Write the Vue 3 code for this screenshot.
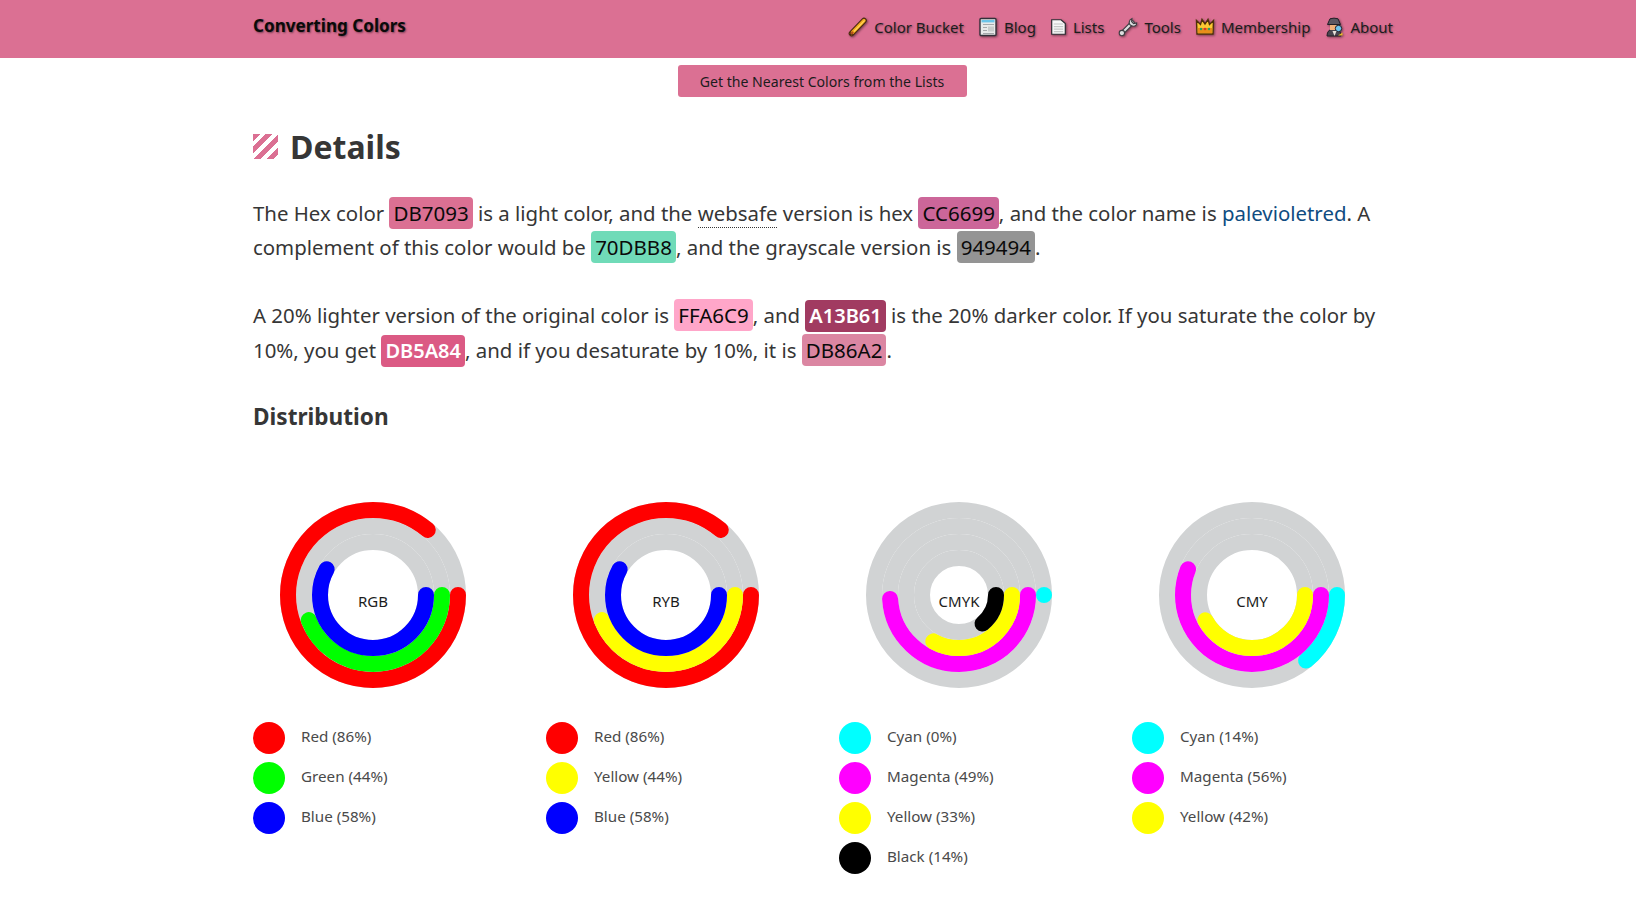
<script setup>
const navItems = [
  { label: 'Color Bucket', icon: 'pencil' },
  { label: 'Blog', icon: 'news' },
  { label: 'Lists', icon: 'page' },
  { label: 'Tools', icon: 'wrench' },
  { label: 'Membership', icon: 'crown' },
  { label: 'About', icon: 'detective' }
]

const charts = [
  {
    title: 'RGB',
    series: [
      { name: 'Red', value: 86, color: '#ff0000' },
      { name: 'Green', value: 44, color: '#00ff00' },
      { name: 'Blue', value: 58, color: '#0000ff' }
    ]
  },
  {
    title: 'RYB',
    series: [
      { name: 'Red', value: 86, color: '#ff0000' },
      { name: 'Yellow', value: 44, color: '#ffff00' },
      { name: 'Blue', value: 58, color: '#0000ff' }
    ]
  },
  {
    title: 'CMYK',
    series: [
      { name: 'Cyan', value: 0, color: '#00ffff' },
      { name: 'Magenta', value: 49, color: '#ff00ff' },
      { name: 'Yellow', value: 33, color: '#ffff00' },
      { name: 'Black', value: 14, color: '#000000' }
    ]
  },
  {
    title: 'CMY',
    series: [
      { name: 'Cyan', value: 14, color: '#00ffff' },
      { name: 'Magenta', value: 56, color: '#ff00ff' },
      { name: 'Yellow', value: 42, color: '#ffff00' }
    ]
  }
]

// rings start at 85 and step in by 16
function radius(i) {
  return 85 - i * 16
}

function dash(i, value) {
  const c = 2 * Math.PI * radius(i)
  return `${(c * value) / 100} ${c}`
}
</script>

<template>
  <div class="page">
    <header class="topbar">
      <div class="wrap topbar-inner">
        <span class="brand">Converting Colors</span>
        <nav class="nav">
          <a v-for="item in navItems" :key="item.label" class="nav-link">
            <svg class="nav-icon" :class="{ narrow: item.icon === 'page' }" viewBox="0 0 20 20">
              <g v-if="item.icon === 'pencil'">
                <path d="M3.5 16.5 L16 3.5" stroke="#4a2a10" stroke-width="5.6" stroke-linecap="round" />
                <path d="M3.5 16.5 L16 3.5" stroke="#f2a71e" stroke-width="3.4" stroke-linecap="round" />
                <path d="M6.5 14 L16.2 3.8" stroke="#ffd75a" stroke-width="1.2" stroke-linecap="round" />
                <path d="M2 18 L2.5 14.5 L5.5 17.5 Z" fill="#4a2a10" stroke="#4a2a10" stroke-width="1" />
                <path d="M3 16.8 L5 14.8" stroke="#b5561c" stroke-width="2.4" />
              </g>
              <g v-else-if="item.icon === 'news'">
                <rect x="2" y="1.5" width="16" height="17" rx="1" fill="#e8eaea" stroke="#33313a" stroke-width="1.4" />
                <rect x="3.5" y="3" width="13" height="2.4" fill="#6cc4e8" />
                <path d="M5 7.5h11M5 10.5h4M5 13.5h4M5 16.5h11" stroke="#a4a8ab" stroke-width="1.2" />
                <rect x="10" y="9.5" width="6" height="5" fill="#c8cccc" />
              </g>
              <g v-else-if="item.icon === 'page'">
                <path d="M2 1.5 H13 L18 6 V18.5 H2 Z" fill="#f6f7f7" stroke="#2c2930" stroke-width="1.4" />
                <path d="M4.5 6.5h11M4.5 9.5h11M4.5 12.5h11M4.5 15.5h11" stroke="#c3c6c6" stroke-width="1.3" />
              </g>
              <g v-else-if="item.icon === 'wrench'">
                <path d="M4 16 L14.5 5.5" stroke="#3d3d42" stroke-width="4.4" stroke-linecap="round" />
                <path d="M4 16 L14.5 5.5" stroke="#dcdedf" stroke-width="2.2" stroke-linecap="round" />
                <path d="M14 1.5 L13.6 4.6 L15.6 6.6 L18.7 6 Q18.6 9.2 15.4 9.2 Q10.9 8.8 11.2 5 Q11.7 2.2 14 1.5 Z" fill="#dcdedf" stroke="#3d3d42" stroke-width="1.1" />
                <circle cx="3.9" cy="16.1" r="2.7" fill="#dcdedf" stroke="#3d3d42" stroke-width="1.1" />
              </g>
              <g v-else-if="item.icon === 'crown'">
                <path d="M1.5 3.5 L5.5 7.5 L7 2.5 L10 7 L13 2.5 L14.5 7.5 L18.5 3.5 L18 17 H2 Z" fill="#fcc932" stroke="#4f300a" stroke-width="1.4" />
                <rect x="2.8" y="11" width="14.4" height="5.2" fill="#e88f1a" />
                <circle cx="6" cy="12" r="1.2" fill="#25a166" />
                <circle cx="10" cy="12" r="1.3" fill="#d8342c" />
                <circle cx="14" cy="12" r="1.2" fill="#25a166" />
              </g>
              <g v-else>
                <path d="M3 19 Q3 12 10 12 Q17 12 17 19 Z" fill="#4a4650" stroke="#211f26" stroke-width="1" />
                <rect x="6" y="6.5" width="8" height="6.5" fill="#f0b27a" />
                <path d="M3.5 7.5 H16.5 L14 1.8 Q10 0.5 6 1.8 Z" fill="#5b5862" stroke="#211f26" stroke-width="1" />
                <circle cx="14.5" cy="11.5" r="3.2" fill="#6fc6ee" stroke="#211f26" stroke-width="1" />
                <path d="M8.5 14 L10.5 19 L12.5 14 Z" fill="#e9e4dc" />
                <path d="M14 18.5 H18.5 V15.5 Z" fill="#e8b92a" />
              </g>
            </svg>
            {{ item.label }}
          </a>
        </nav>
      </div>
    </header>

    <div class="wrap cta-row">
      <a class="cta">Get the Nearest Colors from the Lists</a>
    </div>

    <main class="wrap">
      <h1 class="title">
        <span class="title-mark"></span>
        Details
      </h1>

      <p class="para">
        The Hex color <span class="chip" style="background: #db7093">DB7093</span> is a light color, and the
        <span class="abbr">websafe</span> version is hex <span class="chip" style="background: #cc6699">CC6699</span>, and the color name is
        <a class="link">palevioletred</a>. A complement of this color would be
        <span class="chip" style="background: #70dbb8">70DBB8</span>, and the grayscale version is
        <span class="chip" style="background: #949494">949494</span>.
      </p>

      <p class="para">
        A 20% lighter version of the original color is <span class="chip" style="background: #ffa6c9">FFA6C9</span>, and
        <span class="chip light" style="background: #a13b61">A13B61</span> is the 20% darker color. If you saturate the color by 10%, you get
        <span class="chip light" style="background: #db5a84">DB5A84</span>, and if you desaturate by 10%, it is
        <span class="chip" style="background: #db86a2">DB86A2</span>.
      </p>

      <h2 class="subtitle">Distribution</h2>

      <div class="charts">
        <section v-for="chart in charts" :key="chart.title" class="chart-col">
          <div class="donut">
            <svg width="186" height="186" viewBox="-93 -93 186 186">
              <circle
                v-for="(s, i) in chart.series"
                :key="'bg' + s.name"
                :r="radius(i)"
                fill="none"
                stroke="#d1d3d4"
                stroke-width="16"
              />
              <circle
                v-for="(s, i) in chart.series"
                :key="s.name"
                :r="radius(i)"
                fill="none"
                :stroke="s.color"
                stroke-width="16"
                stroke-linecap="round"
                :stroke-dasharray="dash(i, s.value)"
              />
            </svg>
            <span class="donut-label">{{ chart.title }}</span>
          </div>
          <ul class="legend">
            <li v-for="s in chart.series" :key="s.name" class="legend-row">
              <span class="dot" :style="{ background: s.color }"></span>
              <span class="legend-text">{{ s.name }} ({{ s.value }}%)</span>
            </li>
          </ul>
        </section>
      </div>
    </main>
  </div>
</template>

<style scoped>
.page {
  font-family: "Noto Sans", "Open Sans", sans-serif;
  color: #363636;
  min-height: 916px;
}
.wrap {
  width: 1140px;
  margin-left: 253px;
}
.topbar {
  background: #db7093;
  height: 58px;
}
.topbar-inner {
  display: flex;
  align-items: center;
  justify-content: space-between;
  height: 50px;
}
.brand {
  font-size: 17.1px;
  font-weight: 700;
  color: #0a0a0a;
  text-shadow: 1px 1px 2px rgba(0, 0, 0, 0.45);
}
.nav {
  display: flex;
  gap: 14px;
  padding-top: 3px;
}
.nav-link {
  display: flex;
  align-items: center;
  gap: 6px;
  font-size: 15px;
  color: #1c1c1c;
  text-shadow: 1px 1px 2px rgba(0, 0, 0, 0.4);
}
.nav-icon {
  width: 20px;
  height: 20px;
  filter: drop-shadow(1px 1px 1px rgba(0, 0, 0, 0.45));
}
.nav-icon.narrow {
  width: 17px;
}
.cta-row {
  display: flex;
  justify-content: center;
  padding-top: 7px;
  padding-right: 2px;
  box-sizing: border-box;
}
.cta {
  display: block;
  width: 289px;
  height: 32px;
  line-height: 33px;
  text-align: center;
  background: #db7093;
  border-radius: 3px;
  font-size: 14.1px;
  color: #1c1c1c;
}
.title {
  display: flex;
  align-items: center;
  gap: 12px;
  margin: 27px 0 0;
  font-size: 32px;
  line-height: 45px;
  font-weight: 700;
}
.title-mark {
  width: 25px;
  height: 25px;
  background: repeating-linear-gradient(135deg, #db7093 0 5px, #fff 5px 9px);
}
.para {
  margin: 27px 0 0;
  font-size: 20.4px;
  line-height: 34.4px;
  color: #363636;
}
.para + .para {
  margin-top: 33.6px;
}
.chip {
  display: inline-block;
  font-size: 20.5px;
  line-height: 24px;
  padding: 4px;
  border-radius: 4px;
  color: #0a0a0a;
}
.chip.light {
  color: #fff;
  font-size: 20px;
  font-weight: 600;
}
.abbr {
  border-bottom: 1px dotted #363636;
}
.link {
  color: #0f4c81;
}
.subtitle {
  margin: 35px 0 0;
  font-size: 22.6px;
  line-height: 30px;
  font-weight: 700;
}
.charts {
  display: grid;
  grid-template-columns: repeat(4, 293px);
  margin-top: 70px;
}
.chart-col {
  display: flex;
  flex-direction: column;
}
.donut {
  position: relative;
  width: 240px;
  display: flex;
  justify-content: center;
}
.donut-label {
  position: absolute;
  left: 0;
  right: 0;
  top: 89px;
  text-align: center;
  font-size: 15px;
  line-height: 20px;
  color: #1c1c1c;
}
.legend {
  list-style: none;
  margin: 34px 0 0;
  padding: 0;
}
.legend-row {
  display: flex;
  align-items: center;
  gap: 16px;
  height: 32px;
  margin-bottom: 8px;
  font-size: 15.2px;
  color: #4a4a4a;
}
.legend-text {
  padding-bottom: 5px;
}
.dot {
  width: 32px;
  height: 32px;
  border-radius: 50%;
}
</style>
